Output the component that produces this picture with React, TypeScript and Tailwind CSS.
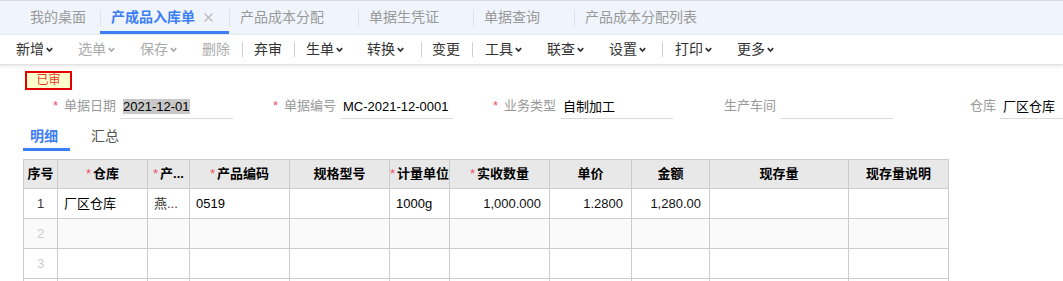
import React from "react";

const font = "font-['Liberation_Sans','Noto_Sans_CJK_SC',sans-serif]";

function Chevron({ disabled }: { disabled?: boolean }) {
  return (
    <svg width="7" height="6" viewBox="0 0 7 6" className="ml-[2px]">
      <path d="M0.8 1.2 L3.5 4.1 L6.2 1.2" fill="none" stroke={disabled ? "#aaaaaa" : "#333333"} strokeWidth="1.7" />
    </svg>
  );
}

type TItem = { t?: string; chev?: boolean; dis?: boolean; sep?: boolean; ml: string };

const toolbar: TItem[] = [
  { t: "新增", chev: true, ml: "ml-[16px]" },
  { t: "选单", chev: true, dis: true, ml: "ml-[25px]" },
  { t: "保存", chev: true, dis: true, ml: "ml-[25px]" },
  { t: "删除", dis: true, ml: "ml-[25px]" },
  { sep: true, ml: "ml-[12px]" },
  { t: "弃审", ml: "ml-[11px]" },
  { sep: true, ml: "ml-[12px]" },
  { t: "生单", chev: true, ml: "ml-[11px]" },
  { t: "转换", chev: true, ml: "ml-[24px]" },
  { sep: true, ml: "ml-[17px]" },
  { t: "变更", ml: "ml-[10px]" },
  { sep: true, ml: "ml-[12px]" },
  { t: "工具", chev: true, ml: "ml-[12px]" },
  { t: "联查", chev: true, ml: "ml-[25px]" },
  { t: "设置", chev: true, ml: "ml-[25px]" },
  { sep: true, ml: "ml-[16px]" },
  { t: "打印", chev: true, ml: "ml-[12px]" },
  { t: "更多", chev: true, ml: "ml-[25px]" },
];

function Star() {
  return <span className="text-[#f0506e] mr-[2px] font-normal">*</span>;
}

function Field({ label, value, star, highlight }: { label: string; value?: string; star?: boolean; highlight?: boolean }) {
  return (
    <div className="flex items-end w-[220px] shrink-0">
      <div className="w-[103px] text-right text-[13px] text-[#999] leading-[20px] pb-[3px] whitespace-nowrap">
        {star && <span className="text-[#f0506e] mr-[6px]">*</span>}
        {label}
      </div>
      <div className="ml-[4px] w-[113px] h-[22px] border-b border-[#dcdcdc] text-[13px] text-black leading-[20px] pl-[3px] whitespace-nowrap overflow-hidden">
        {value && (highlight ? <span className="bg-[#c8c8c8]">{value}</span> : value)}
      </div>
    </div>
  );
}

const cols = [34, 90, 42, 100, 100, 60, 100, 82, 78, 139, 100];
const colW = ["w-[34px]", "w-[90px]", "w-[42px]", "w-[100px]", "w-[100px]", "w-[60px]", "w-[100px]", "w-[82px]", "w-[78px]", "w-[139px]", "w-[100px]"];

const headers: { t: string; star?: boolean }[] = [
  { t: "序号" },
  { t: "仓库", star: true },
  { t: "产...", star: true },
  { t: "产品编码", star: true },
  { t: "规格型号" },
  { t: "计量单位", star: true },
  { t: "实收数量", star: true },
  { t: "单价" },
  { t: "金额" },
  { t: "现存量" },
  { t: "现存量说明" },
];

export default function App() {
  return (
    <div className={`w-[1063px] h-[281px] overflow-hidden bg-white ${font}`}>
      {/* Tab bar */}
      <div className="h-[34px] bg-[#f0f5fd] border-t border-[#d9d9d9] flex items-stretch text-[14px] text-[#999]">
        <div className="w-[100px] pl-[30px] flex items-center">我的桌面</div>
        <div className="relative flex items-center pl-[11px]">
          <div className="absolute left-0 top-[9px] h-[17px] w-px bg-[#dde3ec]" />
          <span className="text-[#3d7ef5] font-bold">产成品入库单</span>
          <span className="w-[34px] pl-[9px] flex items-center">
            <svg width="9" height="9" viewBox="0 0 9 9">
              <path d="M0.5 0.5 L8.5 8.5 M8.5 0.5 L0.5 8.5" stroke="#bbbbbb" strokeWidth="1.3" />
            </svg>
          </span>
          <div className="absolute left-0 right-0 bottom-0 h-[3px] bg-[#3d7ef5]" />
        </div>
        {["产品成本分配", "单据生凭证", "单据查询", "产品成本分配列表"].map((t) => (
          <div key={t} className="flex items-center pl-[11px] relative">
            <div className="absolute left-0 top-[9px] h-[17px] w-px bg-[#dde3ec]" />
            <span>{t}</span>
            <span className="w-[34px]" />
          </div>
        ))}
      </div>

      {/* Toolbar */}
      <div className="h-[31px] bg-white border-t border-[#e3e8ef] border-b border-b-[#e2e2e2] shadow-[0_2px_3px_rgba(0,0,0,0.08)] flex items-center text-[14px] relative z-10">
        {toolbar.map((it, i) =>
          it.sep ? (
            <div key={i} className={`${it.ml} w-px h-[15px] bg-[#d0d0d0]`} />
          ) : (
            <div key={i} className={`${it.ml} flex items-center ${it.dis ? "text-[#aaaaaa]" : "text-[#333333]"}`}>
              <span>{it.t}</span>
              {it.chev && <Chevron disabled={it.dis} />}
            </div>
          )
        )}
      </div>

      {/* Status badge */}
      <div className="pl-[25px] pt-[6px]">
        <div className="w-[47px] h-[19px] border-2 border-[#e30000] bg-[#ffffcc] text-[#e53a2b] text-[12px] leading-[15px] text-center">
          已审
        </div>
      </div>

      {/* Form row */}
      <div className="flex pl-[13px] mt-[6px] whitespace-nowrap">
        <Field label="单据日期" value="2021-12-01" star highlight />
        <Field label="单据编号" value="MC-2021-12-0001" star />
        <Field label="业务类型" value="自制加工" star />
        <Field label="生产车间" />
        <Field label="仓库" value="厂区仓库" />
      </div>

      {/* Sub tabs */}
      <div className="flex ml-[23px] mt-[2px] h-[30px] text-[14px]">
        <div className="w-[47px] pl-[7px] relative flex items-center text-[#3d7ef5] font-bold">
          明细
          <div className="absolute left-0 right-0 bottom-0 h-[3px] bg-[#3d7ef5]" />
        </div>
        <div className="ml-[21px] flex items-center text-[#555]">汇总</div>
      </div>

      {/* Table */}
      <table className="ml-[23px] mt-[8px] border-collapse table-fixed w-[926px] text-[13px]">
        <colgroup>
          {colW.map((c, i) => (
            <col key={i} className={c} />
          ))}
        </colgroup>
        <thead>
          <tr className="h-[29px] bg-[#e8e8e8]">
            {headers.map((h, i) => (
              <th key={i} className="border border-[#cccccc] font-bold text-black text-center px-0 whitespace-nowrap overflow-hidden">
                {h.star && <Star />}
                {h.t}
              </th>
            ))}
          </tr>
        </thead>
        <tbody>
          <tr className="h-[30px]">
            <td className="border border-[#cccccc] text-center text-[#333]">1</td>
            <td className="border border-[#cccccc] pl-[6px] text-black">厂区仓库</td>
            <td className="border border-[#cccccc] pl-[6px] text-[#333]">燕...</td>
            <td className="border border-[#cccccc] pl-[6px] text-black">0519</td>
            <td className="border border-[#cccccc]"></td>
            <td className="border border-[#cccccc] pl-[6px] text-black">1000g</td>
            <td className="border border-[#cccccc] pr-[8px] text-right text-[#111]">1,000.000</td>
            <td className="border border-[#cccccc] pr-[8px] text-right text-[#111]">1.2800</td>
            <td className="border border-[#cccccc] pr-[8px] text-right text-[#111]">1,280.00</td>
            <td className="border border-[#cccccc]"></td>
            <td className="border border-[#cccccc]"></td>
          </tr>
          {[2, 3, 4].map((n) => (
            <tr key={n} className={`h-[30px] ${n === 2 ? "bg-[#fafafa]" : "bg-white"}`}>
              <td className="border border-[#cccccc] text-center text-[#cccccc]">{n < 4 ? n : ""}</td>
              {cols.slice(1).map((_, i) => (
                <td key={i} className="border border-[#cccccc]"></td>
              ))}
            </tr>
          ))}
        </tbody>
      </table>
    </div>
  );
}
